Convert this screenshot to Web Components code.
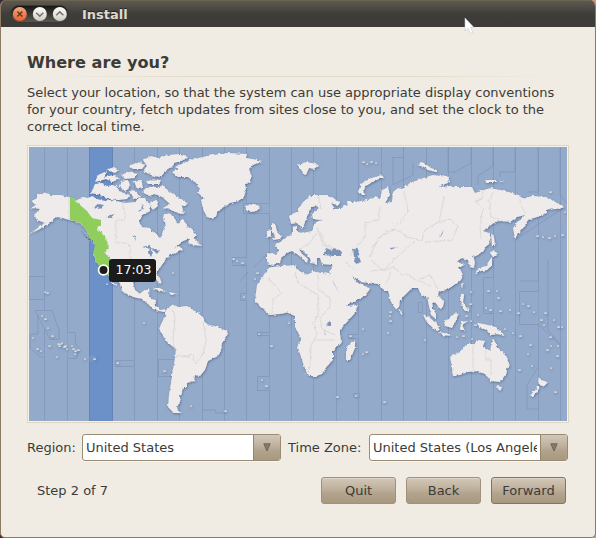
<!DOCTYPE html>
<html lang="en"><head><meta charset="utf-8"><title>Install</title>
<style>
html,body{margin:0;width:596px;height:538px;overflow:hidden;background:linear-gradient(90deg,#3a2836 0 50%,#e0907c 50%)}
body{font:13px/17px "DejaVu Sans",sans-serif;color:#3c3b37}
</style></head><body>
<install-window></install-window>
<script>
const define=(name,html)=>customElements.define(name,class extends HTMLElement{
  constructor(){super();this.attachShadow({mode:'open'}).innerHTML=html}
});

define('title-bar',`<style>
:host{display:flex;align-items:center;height:27px;box-sizing:border-box;padding:1px 0 0 9px;background:linear-gradient(#5d5b50 0,#57554d 3px,#3e3d39 14px,#3c3b37);box-shadow:inset 0 1px #6d6550}
svg{display:block;flex:none}
b{margin-left:13px;padding-top:1px;color:#dfdbd2;font:bold 13px/20px "DejaVu Sans",sans-serif;text-shadow:0 -1px #242320}
</style>
<svg width="59" height="20" viewBox="10 4 59 20"><defs>
<linearGradient id="p" x2="0" y2="1"><stop stop-color="#171613"/><stop offset="1" stop-color="#5c5a54"/></linearGradient>
<linearGradient id="o" x2="0" y2="1"><stop stop-color="#f2b183"/><stop offset=".4" stop-color="#ee875c"/><stop offset="1" stop-color="#ea602e"/></linearGradient>
<linearGradient id="w" x2="0" y2="1"><stop stop-color="#fff"/><stop offset="1" stop-color="#cfccc4"/></linearGradient></defs>
<rect x="10.5" y="5.500" width="58" height="17" rx="8.500" fill="url(#p)" stroke="#393731"/>
<circle cx="19.8" cy="14" r="7" fill="url(#o)"/><circle cx="39.8" cy="14" r="7" fill="url(#w)"/><circle cx="59.8" cy="14" r="7" fill="url(#w)"/>
<path d="M17.3 11.5l5 5m0-5l-5 5" stroke="#5b3a2a" stroke-width="1.5"/>
<path d="M36.2 12.7l3.6 3.4 3.6-3.4M56.2 15.3l3.6-3.4 3.6 3.4" fill="none" stroke="#77746e" stroke-width="1.5"/></svg>
<b><slot></slot></b>`);

define('push-button',`<style>
:host{display:block;box-sizing:border-box;width:75px;height:27px;flex:none}
button{all:unset;box-sizing:border-box;width:100%;height:100%;text-align:center;border:1px solid var(--edge,#a1917b);border-radius:3px;background:linear-gradient(#d3c7b8,#beb09c 45%,#b3a48e 60%,#a8987f);box-shadow:inset 0 1px #ded3c5;line-height:25px}
</style><button><slot></slot></button>`);

define('combo-box',`<style>
:host{display:flex;box-sizing:border-box;height:27px;width:199px;border:1px solid #9a8b75;border-radius:3px;background:#fff;box-shadow:0 1px #f8f5f0;overflow:hidden;flex:none}
span{flex:1;min-width:0;padding-left:3px;line-height:25px;white-space:nowrap;overflow:hidden;margin-right:3px}
i{flex:none;width:26px;border-left:1px solid #94856f;background:linear-gradient(#d3c7b8,#beb09c 45%,#b3a48e 60%,#a8987f);display:grid;place-items:center}
</style><span><slot></slot></span><i><svg width="8" height="9"><path d="M.8 .8h6.400L4 8z" fill="#85796a" stroke="#6e665b"/></svg></i>`);

const poly=(...a)=>a.map(s=>'M'+s+'Z').join('');
const land=poly(
/* North and Central America */
'32 201 37 198 37 195 45 192.5 52 195 60 195 69 197 77 200 84 197 88 198 92 196 97 199 105 201 112 200 125 203 135 202 139 198 145 198 147 202 151 204 150 211 142 216 139 221 141 227 150 228 153 232 157 234 159 238 162 237 163 230 165 226 163 218 164 214 170 213.5 175 219 178 224 181 220 184 220 187 226 192 230 197 235 194 238 187 239.5 181 242 174 248 179 246 183 250 177 252.5 170 255 165 260 160 268 156 273 160 278 161.5 283 159 284 155 277 146 275 137 276 133 282 135 290 140 294 143 291 149.5 289 149 297 155 300.5 156 306 160 310 166 309 165 312 159 311 153 309 148 304 142 299 133 297 123 292 120 284 114 278 111 277 112 280 117 286 113 284 108 274 103 268 96 262 94 255 95 245 91 240 87 231 82 225 75 221 69 220 63 218 57 217 50 223 40 229 29 234.5 39 227 45 223 37 220 34 215 38 211 40 209 32 208 35 205',
/* South America */
'166 309 173 304.5 177 307 187 306 192 309 198 313 203 317 206 324 218 327 227 331 228 335 222 343 221 350 218 356 208 361 205 370 200 376 195 375 194 381 187 383 187 387 183 387 182 393 179 397 181 400 177 407 178 411 182 413 174 413 168 407 169 395 171 383 173 370 175 357 176 349 168 343 163 336 159 329 162 322 165 317',
/* Greenland */
'213 219 207 217 203 209 201 200 204 198 198 193 200 188 195 182 188 177 178 177 172 172 178 169 175 167 184 163 190 160 207 156 227 153 247 154 246 158 253 159 262 161 253 165 249 169 252 177 250 183 245 184 246 190 244 197 238 201 230 203 222 208 217 213',
/* Arctic islands */
'91 193 95 184 101 183 107 186 117 185 119 191 130 195 127 199 118 200 110 199 100 195',
'95 182 98 175 107 171 104 177 115 175 120 179 112 182 106 179','106 170 114 167 119 170 115 173',
'121 175 129 172 138 174 134 178 125 179','121 181 128 180 131 187 125 191 119 186','134 181 141 180 143 187 137 189','129 166 138 162 145 165 142 169 133 169','147 166 143 160 151 156 158 158 168 155 180 154 188 156 184 160 174 163 172 167 164 172 160 177 151 175 143 171','130 191 137 192 140 197 134 199',
'142 192 147 187 157 187 163 186 170 192 180 198 188 204 182 206 184 214 177 213 171 210 163 208 170 204 162 197 155 194 149 196','146 181 161 180 159 184 148 184','150 202 157 200 158 206 153 210',
'191 237 195 239 202 246 194 245 188 243',
/* Europe and Asia */
'267 253 276 254 279 250 275 245 282 241 287 237 293 233 293 227 297 226 297 232 303 233 312 231 314 225 318 221 323 220.5 313 219 312 214 319 208 315 205 309 211 307 217 304 225 302 229 297 223 291 224 289 216 297 211 303 202 312 195 325 195 333 198 341 203 338 206 331 203 335 209 341 209 345 205 348 206 347 202 355 202 367 200 374 197 380 199 382 190 388 187 390 195 385 203 392 202 393 192 398 188 402 189 410 183 420 179 433 175 448 177 450 182 438 187 450 186 460 187 472 187 475 193 484 190 491 188 508 192 520 195 523 199 532 196 547 197 557 203 564 206 560 209 554 208 547 210 547 213 537 217 528 220 524 227 519 233 515 238 513 228 519 221 525 215 517 217 510 222 502 221 495 222 483 231 489 233 491 237 489 243 484 250 478 255 473 257 475 262 474 268 470 267 468 260 462 258 456 262 464 264 459 267 463 275 461 280 455 285 447 289 442 292 439 291 438 295 444 302 443 307 439 308 436 303 432 302 433 309 436 314 436 319 431 315 429 306 427 296 422 297 418 288 412 288 407 293 400 300 399 307 396 309.5 392 304 390 298 388 290 383 290 380 284 370 283.5 362 282 352 276 356 282 362 284 365 286 370 288 366 295 356 301 345 305 341 297 336 287 331 277 330 271 333 265 322 264 320 258 317 258 317 265 312 263 309 257 303 251 299 249 302 254 308 259 307 263 303 259 297 254 292 251 287 253 282 257 280 262 273 265 267 263',
/* Africa */
'271 267 295 265 297 270 308 275 312 271 321 273 330 274 334 284 339 293 345 304 347 306 358 305 355 313 347 322 340 330 341 342 333 352 333 360 328 365 322 374 316 376 308 376 303 363 298 348 301 338 295 327 295 316 287 312.5 280 314 270 315 258 305 255 300 257 285 265 273',
'355 340 355 348 350 360 346 360 346 352 348 345',
/* Islands */
'272 223 275 224 277 231 282 236 280 239 272 240 275 236 272 230','267 231 271 230 271 236 266 238','245 206 255 204 260 208 258 211 250 212 245 209',
'297 165 307 162 319 165 314 169 309 168 306 175 301 171','358 192 361 184 368 179 382 175 384 177 374 181 366 186 363 192 366 195 360 194','417 165 422 162 427 165 431 168 437 170 436 172 428 170 424 167','485 180 497 180 496 182 486 182','499 181 505 182 501 182',
'491 233 494 237 495 246 492 246','490 253 494 250 498 254 493 257','492 257 492 265 487 270 481 271 475 273 479 268 486 266 489 261','461 284 463 283 462 289','399 309 403 313 401 314 399 311','461 295 464 295 463 302 469 312 464 309 460 301',
'423 314 429 317 437 324 440 331 433 328 426 321','438 332 449 334 452 336 442 335','444 321 449 319 456 312 458 315 455 323 452 328 445 326','461 322 468 321 462 325 465 331 460 329',
'477 323 484 324 496 327 505 336 497 334 491 335 486 330 480 328',
'450 357 460 351 467 344 474 344 478 340 485 341 483 346 490 351 493 338 498 348 506 355 509 363 506 374 500 382 491 381 485 374 478 371 468 372 460 375 453 376 452 368','496 386 502 387 500 391','539 376 541 379 547 382 543 387 538 383','537 387 540 387 537 392 533 396 530 396','153 288 160 288 167 292 161 291','169 292 178 294 171 295'
);
const seas=poly('323 255 326 248 331 250 335 248 342 252 341 256 333 256','353 249 359 248 358 254 361 262 356 264 354 257','437 237 441 235 444 229 442 235','390 248 398 247 391 249.5','312 262 313 262 315 263','327 323 331 321 331 325 328 326','94 207 98 204 104 205 100 209','106 218 110 215 116 214 110 218','132 234 135 236 136 241','142 247 150 245 151 249 146 248','150 248 153 252 151 257 148 253','151 248 160 250 157 254','144 204 142 210 138 212','324 328 325 333 327 335 325 335');
const borders='M123 203v6h2v11h-9v23h10l4 4v12M69 197v23M173 309l2 10-2 20 2 13M181 357l12-2 3 9 7-10 3-15-3-17M175 358l5-3 10 2M268 278l14 15-9 6-1 15M295 272l3 11 20 12v20l-5 9 4 10-6 12-1 21-5 8M318 274v15l12 9 0 8-10 13 2 10 13 6M299 248l10-4 9-13M320 232l5 12 14 6M318 197l3 12M332 249l-9-4-6-18M345 262l10 8M350 255l15-18 0-14 14-3 0-14M370 257l8-19 12-6 12-12 6-10-4-19M371 248l14-16 10-3 13 8 14 4 3-11 14-8 5-26M439 222l11-3 8 7-6 14-27 2M415 241l-16 14-14 14-14 2M371 260l12 11 10-4 11 9M406 274l13 7 12 5M391 272l-5 13M483 190v9l-8 2 8 7-3 17 1 14M494 191l-5 9 2 17 14 5M519 196l2 9 4 8M473 344v27M486 347v13h5v15M418 280l12-5 8 14M313 340h22';
let islets='';
[[45,292],[47,293],[42,316],[45,319],[48,328],[52,336],[33,338],[49,346],[57,357],[37,349],[41,351],[58,344],[62,343],[65,346],[67,349],[73,349],[75,354],[78,350],[85,359],[94,359],[107,284],[117,363],[144,323],[164,371],[191,406],[225,411],[173,273],[233,259],[237,261],[242,263],[244,297],[257,273],[255,279],[262,278],[259,334],[271,346],[262,380],[266,386],[289,323],[350,336],[363,329],[366,352],[363,354],[390,312],[390,316],[390,321],[388,333],[384,402],[356,396],[337,397],[425,340],[519,370],[532,366],[488,291],[497,291],[498,298],[486,308],[490,310],[478,315],[500,311],[510,310],[518,313],[523,304],[528,306],[534,312],[545,313],[554,320],[558,327],[562,327],[541,320],[544,325],[550,337],[551,346],[547,350],[558,346],[557,356],[551,368],[555,392],[528,354],[530,345],[513,333],[520,336],[505,329],[363,162],[367,164],[371,162],[376,163],[537,236],[543,237],[549,238],[555,236],[562,235],[565,212],[550,192],[471,292],[470,304],[468,308],[466,316],[471,321],[475,325],[457,337],[463,336],[472,339],[59,346],[61,344],[64,347],[72,346],[75,351]].forEach(([x,y],i)=>islets+=`<rect x="${x-.7}" y="${y-.6}" width="${1.5+i%2}" height="1.5"/>`);
const zones=[44.5,67.5,134.5,157.5,179.5,202.5,224.5,246.5,269.5,291.5,313.5,336.5,358.5,381.5,403.5,426.5,448.5,471.5,493.5,515.5,538.5,560.5];

define('time-zone-map',`<style>
:host{display:block;box-sizing:border-box;width:542px;height:278px;border:1px solid #e0d3bf;padding:1px;background:#f7f3ed;position:relative}
svg{display:block;width:538px;height:274px}
.tip{position:absolute;left:81px;top:113px;width:47px;height:23px;box-sizing:border-box;padding-left:2px;border-radius:3px;background:#1b1b1b;color:#fff;text-align:center;line-height:22px;font-size:12.5px}
</style>
<svg viewBox="29 147 538 274"><defs>
<filter id="coast" x="-2%" y="-2%" width="104%" height="104%"><feTurbulence type="fractalNoise" baseFrequency=".28" numOctaves="2" seed="4"/><feDisplacementMap in="SourceGraphic" scale="3.200" xChannelSelector="R" yChannelSelector="G"/></filter>
<filter id="shade" x="-2%" y="-2%" width="104%" height="104%"><feDropShadow dx=".6" dy="1.100" stdDeviation="1.300" flood-color="#3b527e" flood-opacity=".6"/></filter></defs>
<rect x="29" y="147" width="538" height="274" fill="#94aaca"/>
<rect x="89.5" y="147" width="23" height="274" fill="#6b91c8" stroke="#6484b8"/>
<g fill="none" stroke="#8094b8" stroke-opacity=".75">
${zones.map(x=>`<path d="M${x} 147v274"/>`).join('')}
<path fill="#94aaca" d="M29 276.500h15.500v23H29zM35 310.500h17l7 20v9h-9zM38 315v19h-8v14l10 9h5M67.500 332.500h8v11l4 6-3 9h-9M115.500 360.500h19v6h-19zM158.500 359.500h16v17h-16zM202 410h13.500v3h10M269.500 203.500h-26v10h26M246.500 257.500h-14v8h14M246.500 293.500h-6v7h6M269.500 332.500h-12v3h12M269.500 376.500h-12v14h12M358.500 334.500h-10v4h10M353.500 393.500h6v4h-6zM418.500 302.500h4v10h-4zM538.500 291.500h-19v33h19M493.500 277.500h-10v36h10M392 157.500h11.500v-11"/>
<path d="M393 158v27l20-10v-12M448 147v25h7l16-9v-16M478 185v-9l15-10v-19M500 177v-5h15v-25M515 240l48-32M538.500 245v36h-19M527 192h11v-45M538 324l22 21M538 367l-11 18v24h11M548 260v70l12 14M560 147v48l7 8M253 268l16-16M248 272l-8 9"/></g>
<rect x="89" y="355.500" width="7" height="6" fill="#94aaca" opacity=".3"/>
<g filter="url(#shade)"><g filter="url(#coast)"><path d="${land}" fill="#eeebea"/>
<path d="${seas}" fill="#7c93b9"/>
<path d="M70 197L76 200 80 205 87 211 92 218 101 220 101 226 97 226 98 229 106 238 109 247 104 253 110 257 110 277 107 275 103 268 96 262 94 255 95 245 91 240 87 231 82 225 76 221 70 220Z" fill="#8fce5b"/></g>
<g fill="#dddde0">${islets}</g></g>
<path d="${borders}" fill="none" stroke="#c9c6ca" stroke-width=".7" opacity=".75" filter="url(#coast)"/>
<path d="M81 231l5 6 8 8M77 223l6 5" stroke="#8c9cb8" stroke-width="1.500" stroke-dasharray="2 1"/>
<circle cx="103.500" cy="270" r="4.900" fill="#1b1b1b" stroke="#fff" stroke-width="1.800"/></svg>
<div class="tip">17:03</div>`);

define('install-window',`<style>
:host{display:flex;flex-direction:column;box-sizing:border-box;width:596px;height:538px;border:1px solid #8c7a62;border-top:0;border-radius:6px 6px 5px 5px;background:#f0ebe3;overflow:hidden;position:relative}
main{display:flex;flex-direction:column;padding:25px 26px 0}
h1{margin:0;font:bold 16.1px/21px "DejaVu Sans",sans-serif;height:24px}
hr{margin:0 0 7px;width:100%;border:0;height:1px;background:linear-gradient(90deg,transparent 5%,#e2dbc6 30%,#e2dbc6 70%,transparent 96%)}
p{margin:0 0 10px;white-space:nowrap}
.row{display:flex;align-items:center}
.fields{margin-top:11px}
.fields span{white-space:nowrap;flex:none}
.fields span:first-child{width:55px}.fields span:nth-of-type(2){width:81px;margin-left:7px}
.actions{margin:16px 3px 0 10px;gap:10px}.actions span{flex:1}
.cursor{position:absolute;left:463px;top:17px}
</style>
<title-bar>Install</title-bar>
<main><h1>Where are you?</h1><hr>
<p>Select your location, so that the system can use appropriate display conventions<br>for your country, fetch updates from sites close to you, and set the clock to the<br>correct local time.</p>
<time-zone-map></time-zone-map>
<div class="row fields"><span>Region:</span><combo-box>United States</combo-box><span>Time Zone:</span><combo-box>United States (Los Angeles)</combo-box></div>
<div class="row actions"><span>Step 2 of 7</span><push-button>Quit</push-button><push-button>Back</push-button><push-button style="--edge:#83755f">Forward</push-button></div>
</main>
<svg class="cursor" width="12" height="18"><path d="M1 1v13l3-3 2.500 5.500 2.500-1-2.500-5H10z" fill="#fff" stroke="#c5cbe2" stroke-width=".6"/></svg>`);
</script></body></html>
